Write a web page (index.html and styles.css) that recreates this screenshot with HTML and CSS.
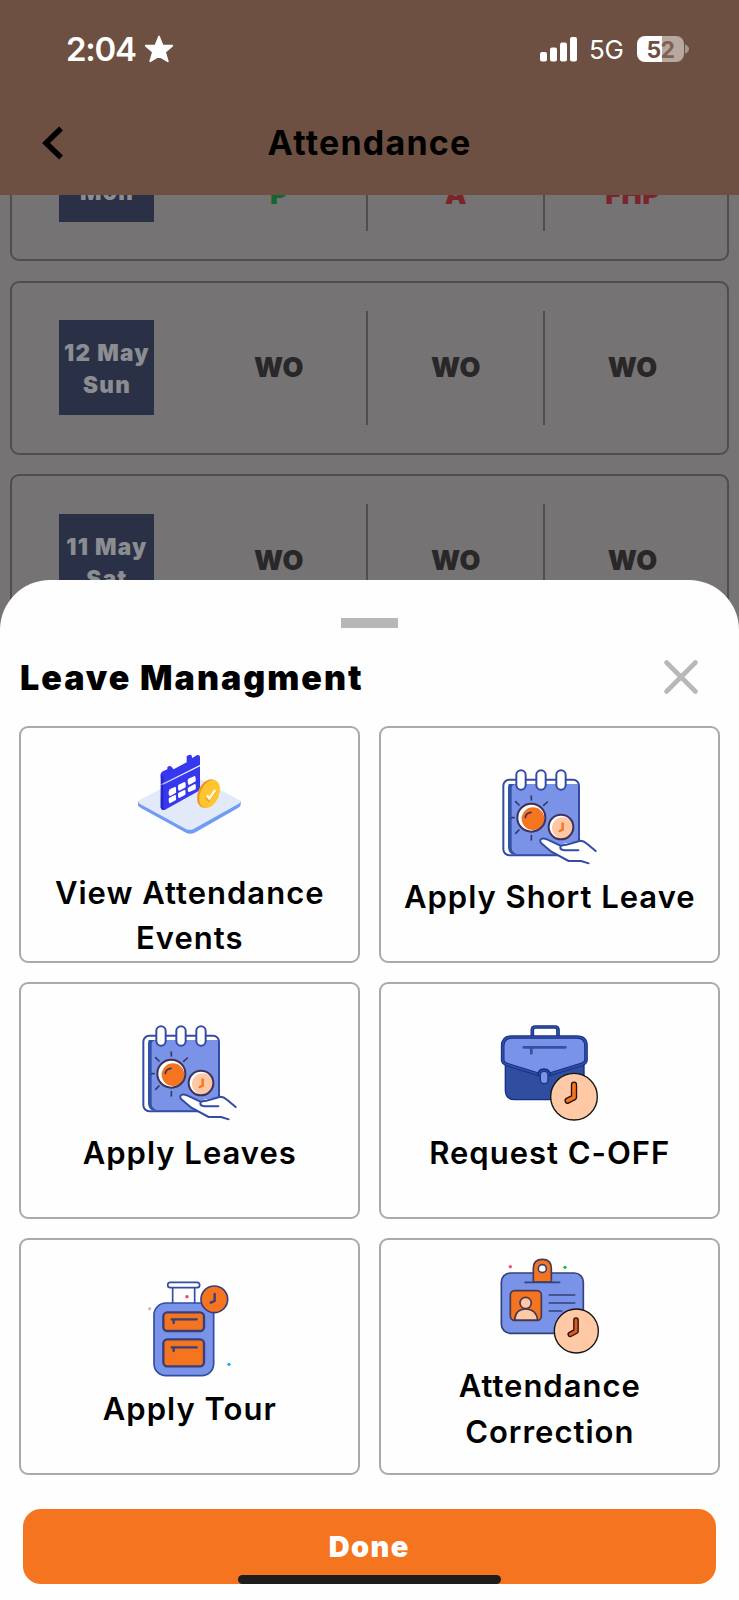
FILE: index.html
```html
<!DOCTYPE html>
<html lang="en">
<head>
<meta charset="utf-8">
<title>Attendance</title>
<link rel="stylesheet" href="styles.css">
</head>
<body>
<div class="screen">
  <header class="header">
    <div class="status">
      <span class="clock">2:04</span>
      <svg class="star" viewBox="0 0 30 28"><path d="M15 1.500 18.500 10.300 28.200 10.700 21 17 23.800 26.300 15 20.900 6.200 26.300 9 17 1.800 10.700 11.500 10.300Z" fill="#fff" stroke="#fff" stroke-width="1.800" stroke-linejoin="round"/></svg>
      <svg class="signal" viewBox="0 0 37 25" fill="#fff"><rect y="15" width="7" height="9.500" rx="2"/><rect x="10" y="10.500" width="7" height="14" rx="2"/><rect x="20" y="5.500" width="7" height="19" rx="2"/><rect x="30" y="0" width="7" height="24.500" rx="2"/></svg>
      <span class="network">5G</span>
      <span class="battery"><span class="five">5</span><span class="two">2</span></span>
      <svg class="nub" viewBox="0 0 4 10"><path d="M0 .5Q4 2 4 5T0 9.500Z" fill="#a7968d"/></svg>
    </div>
    <div class="nav">
      <svg class="back" viewBox="0 0 22 34"><path d="M19 2.500 4 17 19 31.500" fill="none" stroke="#000" stroke-width="5.500"/></svg>
      <h1 class="title">Attendance</h1>
    </div>
  </header>

  <main class="days">
    <section class="day"><div class="date">13 May<br>Mon</div><div class="cell present">P</div><div class="cell absent">A</div><div class="cell absent">FHP</div></section>
    <section class="day"><div class="date">12 May<br>Sun</div><div class="cell">WO</div><div class="cell">WO</div><div class="cell">WO</div></section>
    <section class="day"><div class="date">11 May<br>Sat</div><div class="cell">WO</div><div class="cell">WO</div><div class="cell">WO</div></section>
  </main>

  <div class="sheet">
    <div class="handle"></div>
    <div class="sheet-head">
      <h2 class="sheet-title">Leave Managment</h2>
      <svg class="close" viewBox="0 0 36 36"><path d="M3.500 3.500 32.500 32.500M32.500 3.500 3.500 32.500" stroke="#b8b8b8" stroke-width="4.600" stroke-linecap="round"/></svg>
    </div>
    <div class="grid">
      <div class="card">
        <svg class="icon-large" viewBox="-9 -39 432 432">
          <path d="M54 184V196Q56 200 64 205L198 278Q211 284 224 278L354 204Q362 199 362 194V184Z" fill="#719cf3"/>
          <path d="M60 179 196 108Q209 102 222 108L356 179Q366 185 356 191L222 266Q209 273 196 266L60 192Q50 186 60 179Z" fill="#e2e9f8"/>
          <path d="M122 103Q123 96 130 93L142 88V82Q147 76 153 79L161 88 200 67V49Q207 42 214 45L217 54 230 46Q240 43 240 52V75L124 135Z" fill="#3638ef"/>
          <path d="M123 137 240 79V151L135 209Q123 212 122 202Z" fill="#3638ef"/>
          <path d="M122 103 130 110V205L135 209Q123 212 122 202Z" fill="#2727c7"/>
          <path d="M123 134 240 76" stroke="#dfe5ff" stroke-width="2"/>
          <g fill="#fff"><path d="M149 148 166 140Q169 141 168 158L151 168Q145 169 146 155Z"/><path d="M176 134 193 126Q198 125 197 142L178 152Q173 152 174 138Z"/><path d="M205 116 224 108Q228 109 227 124L207 135Q203 134 203 121Z"/><path d="M148 173 166 164Q169 166 168 180L150 190Q146 190 146 176Z"/><path d="M176 158 194 149Q198 150 196 164L178 174Q173 174 174 161Z"/><path d="M206 142 224 132Q229 132 227 148L208 156Q203 156 203 146Z"/></g>
          <ellipse cx="264" cy="161" rx="30" ry="45" transform="rotate(24 264 161)" fill="#e89a20"/>
          <ellipse cx="269" cy="162" rx="28" ry="44" transform="rotate(24 269 162)" fill="#ffc52e"/>
          <path d="M258 170 266 179 286 152" fill="none" stroke="#ef9f24" stroke-width="10"/><path d="M260 167 268 175 286 150" fill="none" stroke="#fff8df" stroke-width="8"/>
        </svg>
        <p class="label">View Attendance Events</p>
      </div>
      <div class="card">
        <svg class="icon" viewBox="48 54 321 321">
          <g id="leave-art" stroke-linecap="round" stroke-linejoin="round">
            <rect x="70" y="89" width="227" height="227" rx="18" fill="#fff"/>
            <path d="M86 102H297V314H106Q84 314 84 291V112Z" fill="#3153a6"/>
            <path d="M105 102H297V314H115Q94 309 95 291V115Q96 105 105 102Z" fill="#7a93e7"/>
            <rect x="70" y="89" width="227" height="227" rx="18" fill="none" stroke="#344ca4" stroke-width="6"/>
            <g fill="#fff" stroke="#344ca4" stroke-width="6"><rect x="109" y="61" width="28" height="58" rx="14"/><rect x="169" y="61" width="28" height="58" rx="14"/><rect x="229" y="61" width="28" height="58" rx="14"/></g>
            <path d="M154 138V150M154 257V270M95 203H102M107 155 117 165M202 156 191 166M107 250 117 240" stroke="#303969" stroke-width="5"/>
            <circle cx="154" cy="203" r="41" fill="#fff"/><circle cx="159" cy="206" r="34" fill="#f57420"/><circle cx="154" cy="203" r="42" fill="none" stroke="#3c325b" stroke-width="6"/>
            <path d="M136 202Q138 189 153 187" fill="none" stroke="#3c325b" stroke-width="5"/>
            <circle cx="243" cy="231" r="37" fill="#fff"/><circle cx="248" cy="234" r="32" fill="#ffc7a3"/><circle cx="243" cy="231" r="37" fill="none" stroke="#3c325b" stroke-width="6"/>
            <path d="M248 220V239L239 243" fill="none" stroke="#f57420" stroke-width="7"/>
            <path d="M326 340 303 333H266L214 305 184 280Q177 271 184 267Q190 263 201 268L241 289Q246 281 259 280L302 272Q313 274 347 303V340Z" fill="#fff"/>
            <path d="M326 340 303 333H266L214 305 184 280Q177 271 184 267Q190 263 201 268L241 287M295 301H253Q240 299 241 291Q243 284 259 284L301 272Q311 272 321 281L347 303" fill="none" stroke="#344ca4" stroke-width="6"/>
          </g>
        </svg>
        <p class="label">Apply Short Leave</p>
      </div>
      <div class="card">
        <svg class="icon" viewBox="48 54 321 321"><use href="#leave-art"/></svg>
        <p class="label">Apply Leaves</p>
      </div>
      <div class="card">
        <svg class="icon" viewBox="48 41 321 321" stroke-linecap="round" stroke-linejoin="round">
          <path d="M157 78V59Q157 50 166 50H225Q234 50 234 59V78" fill="none" stroke="#142e83" stroke-width="11"/><path d="M157 78V59Q157 50 166 50H225Q234 50 234 59V78" fill="none" stroke="#3250aa" stroke-width="5"/>
          <path d="M76 145H312V268H105Q76 268 76 239Z" fill="#304da0" stroke="#142e83" stroke-width="4"/>
          <path d="M96 80H291Q318 80 318 107V149Q317 158 306 162L192 197 79 162Q68 157 68 149V107Q68 80 96 80Z" fill="#7893e8" stroke="#142e83" stroke-width="11"/>
          <path d="M96 80H291Q318 80 318 107V149Q317 158 306 162L192 197 79 162Q68 157 68 149V107Q68 80 96 80Z" fill="none" stroke="#3250aa" stroke-width="5"/>
          <path d="M131 111H256M154 113V129" fill="none" stroke="#3451a4" stroke-width="8"/>
          <path d="M174 195Q174 176 192 176T211 195" fill="#304da0" stroke="#142e83" stroke-width="4"/>
          <rect x="181" y="183" width="23" height="37" rx="11" fill="#7893e8" stroke="#183488" stroke-width="4"/>
          <circle cx="282" cy="259" r="70" fill="#ffc9a5" stroke="#151313" stroke-width="4"/>
          <path d="M282 223V261L263 271" fill="none" stroke="#260f08" stroke-width="19"/><path d="M282 223V261L263 271" fill="none" stroke="#f57420" stroke-width="11"/>
        </svg>
        <p class="label">Request C-OFF</p>
      </div>
      <div class="card">
        <svg class="icon" viewBox="19 60 321 321" stroke-linecap="round" stroke-linejoin="round">
          <path d="M129 83V130M195 83V130" stroke="#344ca4" stroke-width="5"/>
          <rect x="114" y="67" width="96" height="16" rx="8" fill="#fff" stroke="#344ca4" stroke-width="5"/>
          <rect x="73" y="129" width="179" height="218" rx="36" fill="#7893e8" stroke="#344ca4" stroke-width="5"/>
          <rect x="101" y="157" width="122" height="56" rx="12" fill="#f57420" stroke="#3b3d79" stroke-width="7"/>
          <rect x="101" y="238" width="122" height="81" rx="12" fill="#f57420" stroke="#3b3d79" stroke-width="7"/>
          <path d="M126 178H201M132 180V189M126 262H201M132 264V273" fill="none" stroke="#3b3d79" stroke-width="7"/>
          <circle cx="254" cy="118" r="40" fill="#f57420" stroke="#3b3d79" stroke-width="5"/><path d="M255 102V123L243 128" fill="none" stroke="#3b3d79" stroke-width="7"/>
          <circle cx="172" cy="110" r="5" fill="#ef4261"/><circle cx="60" cy="146" r="5" fill="#d6b9b7"/><circle cx="298" cy="313" r="5" fill="#18aee9"/>
        </svg>
        <p class="label">Apply Tour</p>
      </div>
      <div class="card">
        <svg class="icon" viewBox="48 51 321 321" stroke-linecap="round" stroke-linejoin="round">
          <rect x="64" y="99" width="246" height="181" rx="27" fill="#7893e8" stroke="#344277" stroke-width="5"/>
          <path d="M160 126V85Q160 58 187 58T214 85V126Z" fill="#f57420" stroke="#4b3750" stroke-width="5"/>
          <circle cx="187" cy="86" r="12" fill="#fff" stroke="#344277" stroke-width="5"/>
          <path d="M135 127H239M208 165H284M208 189H284M208 213H245" stroke="#344277" stroke-width="5"/>
          <rect x="91" y="152" width="93" height="89" rx="13" fill="#f57420" stroke="#4b3750" stroke-width="5"/>
          <path d="M104 240Q106 207 137 207T173 240Z" fill="#ffc9a5" stroke="#4b3750" stroke-width="5"/><circle cx="137" cy="189" r="17" fill="#ffc9a5" stroke="#4b3750" stroke-width="5"/>
          <circle cx="289" cy="273" r="66" fill="#ffc9a5" stroke="#151313" stroke-width="4"/>
          <path d="M288 240V274L271 283" fill="none" stroke="#260f08" stroke-width="17"/><path d="M288 240V274L271 283" fill="none" stroke="#d95b23" stroke-width="9"/>
          <circle cx="91" cy="80" r="5" fill="#f14f78"/><circle cx="255" cy="82" r="5" fill="#23bd36"/>
        </svg>
        <p class="label">Attendance Correction</p>
      </div>
    </div>
    <button class="done">Done</button>
    <div class="home-indicator"></div>
  </div>
</div>
</body>
</html>
```

FILE: styles.css
```css
* { box-sizing: border-box; }
body { margin: 0; background: #767374; font-family: Inter, "Liberation Sans", sans-serif; }
h1, h2, p { margin: 0; }
svg { display: block; flex: none; }
.screen { position: relative; width: 739px; height: 1600px; overflow: hidden; display: flex; flex-direction: column; }
.header { height: 195px; flex: none; background: #6d5041; }
.status { height: 98px; display: flex; align-items: center; padding: 0 50px 0 66px; color: #fff; }
.clock { font-size: 33px; font-weight: 600; line-height: 40px; letter-spacing: -1.300px; width: 78px; white-space: nowrap; }
.star { width: 30px; height: 28px; }
.signal { width: 37px; height: 25px; margin-left: auto; }
.network { font-size: 26px; line-height: 32px; margin-left: 12px; width: 48px; margin-top: 2px; letter-spacing: -.3px; }
.battery { width: 47px; height: 26px; border-radius: 8px; background: linear-gradient(90deg, #fff 25px, #b7a8a0 25px); display: flex; justify-content: center; align-items: center; font-size: 23px; font-weight: 700; line-height: 26px; letter-spacing: -.5px; padding-top: 1px; }
.five { color: #6d5041; }
.two { color: #7d6254; }
.nub { width: 4px; height: 10px; margin-left: 1px; }
.nav { height: 90px; display: grid; grid-template-columns: 64px 1fr 64px; align-items: center; }
.back { width: 22px; height: 34px; margin-left: 42px; }
.title { font-size: 34px; font-weight: 700; line-height: 44px; text-align: center; letter-spacing: 1.200px; color: #000; }
.days { flex: 1; overflow: hidden; padding: 0 10px; }
.day { height: 174px; margin-bottom: 19.500px; border: 2px solid #4f4d4e; border-radius: 9px; display: grid; grid-template-columns: 178.500px 177px 177px 176.500px; align-items: center; }
.day:first-child { margin-top: -108px; }
.day:first-child .cell { padding-top: 41px; }
.date { width: 95px; height: 95px; margin-left: 47px; background: #2a3147; color: #8b8d90; font-size: 22.500px; line-height: 32px; font-weight: 900; letter-spacing: 1.300px; text-align: center; padding: 17px 0 0 1px; white-space: nowrap; }
.cell { height: 114px; display: flex; align-items: center; justify-content: center; border-right: 2px solid #4f4d4e; font-size: 27px; font-weight: 900; letter-spacing: .5px; color: #292728; padding: 0 0 1px 2px; }
.cell:last-child { border-right-color: transparent; }
.cell.present { color: #17652f; }
.cell.absent { color: #792529; }
.sheet { position: absolute; left: 0; top: 580px; width: 739px; height: 1020px; background: #fefefe; border-radius: 50px 50px 0 0; padding: 38px 19.500px 0 19px; display: flex; flex-direction: column; }
.handle { width: 57px; height: 10px; background: #b7b7b7; align-self: center; }
.sheet-head { height: 98px; display: flex; align-items: center; justify-content: space-between; padding: 0 21px 0 1px; }
.sheet-title { font-size: 34px; font-weight: 900; line-height: 44px; letter-spacing: 2px; white-space: nowrap; color: #000; padding-top: 2px; }
.close { width: 36px; height: 36px; }
.grid { display: grid; grid-template-columns: 1fr 1fr; grid-auto-rows: 236.500px; gap: 19.500px; }
.card { border: 2px solid #aaa; border-radius: 9px; display: flex; flex-direction: column; align-items: center; justify-content: center; }
.icon { width: 107px; height: 107px; }
.icon-large { width: 144px; height: 144px; }
.label { font-size: 31px; font-weight: 640; line-height: 45.500px; letter-spacing: 1px; text-align: center; max-width: 320px; color: #000; margin: -1px 0 1px 1px; }
.done { width: 693px; height: 75.500px; margin-top: 34px; align-self: center; border: 0; border-radius: 18px; background: #f57420; color: #fff; font-family: inherit; font-size: 29px; font-weight: 900; letter-spacing: 1.400px; flex: none; padding: 1px 0 0; }
.home-indicator { width: 263px; height: 9.500px; border-radius: 5px; background: #1d1e1b; align-self: center; margin-top: -9.500px; position: relative; flex: none; }
```
